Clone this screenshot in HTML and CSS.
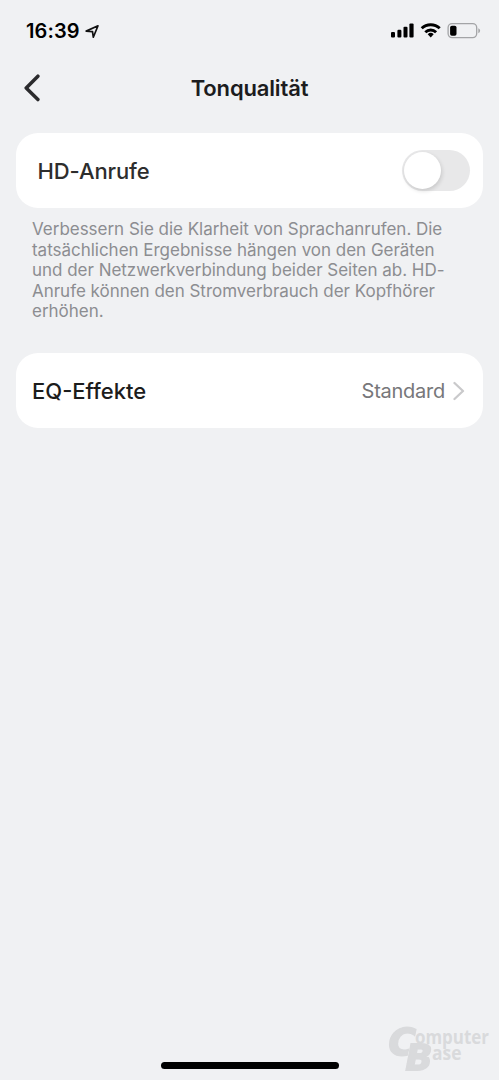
FILE: index.html
```html
<!DOCTYPE html>
<html lang="de">
<head>
<meta charset="utf-8">
<title>Tonqualität</title>
<link rel="stylesheet" href="styles.css">
</head>
<body>
<div class="screen">
  <div class="status">
    <span class="time">16:39</span>
    <svg class="location" width="15" height="15" viewBox="0 0 15 15"><path d="M1.2 7.1 13 1.8 8.3 13.2 7.5 7.6Z" fill="none" stroke="#111" stroke-width="1.7" stroke-linejoin="round"/></svg>
    <svg class="indicators" width="92" height="18" viewBox="0 0 92 18">
      <rect x="1" y="11" width="4" height="5.5" rx="1.1"/>
      <rect x="7.4" y="8.8" width="4" height="7.7" rx="1.1"/>
      <rect x="13.5" y="5.7" width="4" height="10.8" rx="1.1"/>
      <rect x="19.4" y="2.4" width="4.2" height="14.1" rx="1.1"/>
      <g fill="none" stroke="#000" stroke-width="2.9"><path d="M31.7 7.3a13 13 0 0 1 18 0"/><path d="M35.3 11.2a7.8 7.8 0 0 1 10.8 0"/></g>
      <path d="M37.7 13.3a4.3 4.3 0 0 1 6 0l-3 3.2z"/>
      <rect x="58.1" y="2.6" width="28.6" height="14" rx="4" fill="none" stroke="#a3a4a6" stroke-width="1.3"/>
      <rect x="60.1" y="4.7" width="6.4" height="10" rx="1.8"/>
      <path d="M88.3 7.2q1.8.8 1.8 2.5t-1.8 2.5z" fill="#a3a4a6"/>
    </svg>
  </div>
  <header class="header">
    <svg class="back" width="20" height="30" viewBox="0 0 20 30"><path d="M17.9 3.2 6.2 15 17.9 26.6" fill="none" stroke="#2b2b2d" stroke-width="3.5" stroke-linecap="round" stroke-linejoin="round"/></svg>
    <h1 class="title">Tonqualität</h1>
  </header>
  <main class="content">
    <section class="card calls">
      <span class="label">HD-Anrufe</span>
      <span class="switch"><span class="knob"></span></span>
    </section>
    <p class="note">Verbessern Sie die Klarheit von Sprachanrufen. Die<br>tatsächlichen Ergebnisse hängen von den Geräten<br>und der Netzwerkverbindung beider Seiten ab. HD-<br>Anrufe können den Stromverbrauch der Kopfhörer<br>erhöhen.</p>
    <section class="card effects">
      <span class="label">EQ-Effekte</span>
      <span class="value">Standard</span>
      <svg class="chevron" width="12" height="22" viewBox="0 0 12 22"><path d="M1.5 3 10 11 1.5 19" fill="none" stroke="#c9c9cb" stroke-width="2.3" stroke-linecap="round" stroke-linejoin="round"/></svg>
    </section>
  </main>
  <footer class="footer">
    <div class="home"></div>
    <svg class="brand" width="105" height="50" viewBox="0 0 105 50">
      <g fill="#d9dadc" font-family="Open Sans, sans-serif" font-weight="700">
        <text x="30" y="20" font-size="19.5" textLength="74" lengthAdjust="spacingAndGlyphs">omputer</text>
        <text x="47" y="36" font-size="19.5" textLength="29.5" lengthAdjust="spacingAndGlyphs">ase</text>
        <g font-family="DejaVu Sans, sans-serif" font-style="italic" stroke="#d9dadc" stroke-width="1.8">
          <text class="initial" x="3.5" y="31" font-size="37.5" textLength="27.5" lengthAdjust="spacingAndGlyphs">C</text>
          <text class="initial" x="20.5" y="45.5" font-size="36" textLength="27" lengthAdjust="spacingAndGlyphs">B</text>
        </g>
      </g>
    </svg>
  </footer>
</div>
</body>
</html>
```
FILE: styles.css
```css
* { box-sizing: border-box; }
body { margin: 0; background: #f0f1f3; font-family: Inter, "Liberation Sans", sans-serif; }
.screen { height: 1080px; display: flex; flex-direction: column; overflow: hidden; }
.status { height: 60px; padding: 2px 18px 0 26px; display: flex; align-items: center; }
.time { font-size: 20px; font-weight: 600; letter-spacing: 0.1px; color: #000; }
.location { margin-left: 5px; }
.indicators { margin-left: auto; margin-right: -1px; margin-top: -3px; }
.header { height: 56px; padding-left: 21px; display: grid; align-items: center; }
.back, .title { grid-area: 1 / 1; }
.back { margin-left: -1px; }
.title { margin: 0 21px 0 0; text-align: center; font-size: 22px; font-weight: 600; letter-spacing: -0.15px; color: #1c1c1e; }
.content { padding: 17px 16px 0; }
.card { height: 74.5px; border-radius: 22px; background: #fff; display: flex; align-items: center; }
.calls { padding: 0 13px 0 21.5px; }
.label { font-size: 22px; font-weight: 500; color: #1c1c1c; }
.calls .label { padding-top: 1px; letter-spacing: -0.1px; color: #2d2d2d; }
.switch { margin-left: auto; width: 68px; height: 41px; padding: 2px; border-radius: 21px; background: #e8e8e9; }
.knob { display: block; width: 37px; height: 37px; border-radius: 50%; background: #fff; box-shadow: 1px 2px 4px rgba(0, 0, 0, .14); }
.note { margin: 11.5px 0 31.5px 16px; font-size: 17px; line-height: 20.6px; letter-spacing: -0.02px; color: #8c8d91; white-space: nowrap; }
.effects { padding: 0 18px 0 16px; }
.value { margin-left: auto; font-size: 20px; letter-spacing: -0.25px; color: #77777a; }
.chevron { margin-left: 8px; }
.footer { margin-top: auto; height: 60px; padding: 0 9px 6px 161px; display: flex; justify-content: space-between; align-items: flex-end; }
.home { width: 178px; height: 7px; margin-bottom: 5px; border-radius: 4px; background: #000; }
.brand { overflow: visible; }
.initial { filter: drop-shadow(0 0 .5px #f0f1f3) drop-shadow(0 0 .5px #f0f1f3); }
```
